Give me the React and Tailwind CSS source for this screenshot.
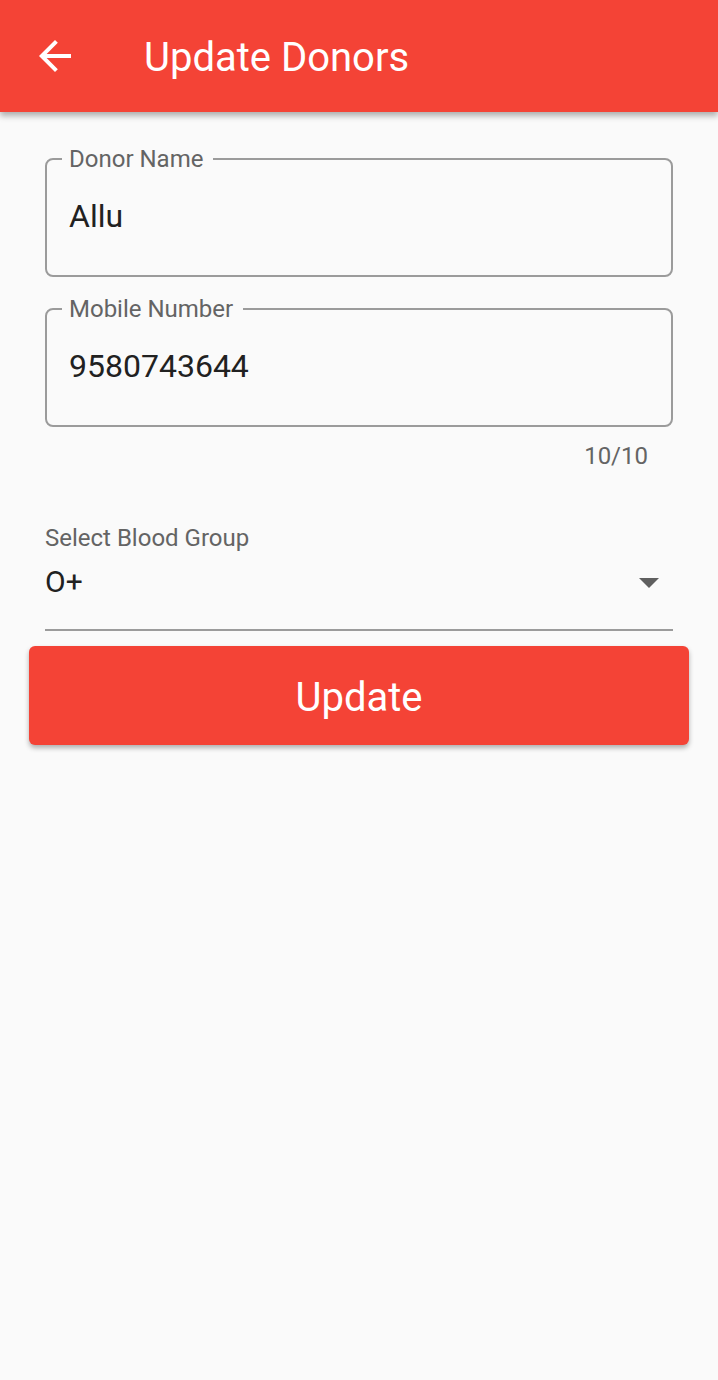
import React from 'react';

const font = { fontFamily: 'Roboto, "Noto Sans", sans-serif' };

function OutlinedField({ label, value, className = '' }) {
  return (
    <fieldset className={`border-2 border-[#9b9b9b] rounded-lg px-[15px] ${className}`}>
      <legend className="pl-[7px] pr-[10px] text-[24px] leading-none text-[#646464]">{label}</legend>
      <div className="h-[104px] pt-[29px] pl-[7px] text-[32px] leading-none text-[#212121]">{value}</div>
    </fieldset>
  );
}

export default function App() {
  return (
    <div className="min-h-[1380px] bg-[#fafafa]" style={font}>
      <header className="h-[112px] bg-[#f44336] flex items-center pl-[31px] shadow-[0_4px_6px_rgba(0,0,0,0.3)] relative z-10">
        <svg viewBox="0 0 24 24" className="w-12 h-12" fill="white">
          <path d="M20 11H7.83l5.59-5.59L12 4l-8 8 8 8 1.41-1.41L7.83 13H20v-2z" />
        </svg>
        <h1 className="ml-[65px] mt-[4px] text-[40px] leading-none text-white">Update Donors</h1>
      </header>

      <main className="px-[45px] pt-[35px]">
        <OutlinedField label="Donor Name" value="Allu" />
        <OutlinedField label="Mobile Number" value="9580743644" className="mt-[20px]" />
        <div className="mt-[17px] pr-[25px] text-right text-[24px] leading-none text-[#646464]">10/10</div>

        <div className="mt-[58px] text-[24px] leading-none text-[#646464]">Select Blood Group</div>
        <div className="mt-2 pb-[23px] border-b-2 border-[#9b9b9b] flex items-center justify-between">
          <span className="text-[30px] leading-none text-[#212121]">O+</span>
          <svg viewBox="0 0 24 24" className="w-12 h-12" fill="#5f5f5f">
            <path d="M7 10l5 5 5-5z" />
          </svg>
        </div>

        <button className="-mx-4 mt-[15px] w-[calc(100%+32px)] h-[99px] pt-[4px] rounded-md bg-[#f44336] shadow-[0_3px_5px_rgba(0,0,0,0.3)] text-white text-[40px] leading-none">
          Update
        </button>
      </main>
    </div>
  );
}
